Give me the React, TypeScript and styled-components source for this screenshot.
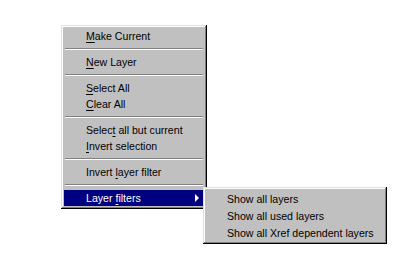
import React from 'react';
import styled, { createGlobalStyle } from 'styled-components';

interface MenuEntry {
  label: string;
  key?: number;
  sep?: boolean;
  active?: boolean;
  sub?: boolean;
}

interface ItemProps {
  readonly $active?: boolean;
}

const GlobalStyle = createGlobalStyle`
  html, body {
    margin: 0;
    padding: 0;
    background: #ffffff;
  }
  body {
    font-family: "Liberation Sans", Arial, sans-serif;
    font-size: 10.6px;
  }
`;

const Page = styled.div`
  width: 409px;
  height: 264px;
  padding: 25px 0 0 61px;
  box-sizing: border-box;
`;

const Menu = styled.div<{ $width: number }>`
  width: ${(p) => p.$width}px;
  box-sizing: border-box;
  padding: 3px;
  background: #c0c0c0;
  box-shadow: inset -1px -1px #000000, inset 1px 1px #dfdfdf,
    inset -2px -2px #808080, inset 2px 2px #ffffff;
  display: flex;
  flex-direction: column;
`;

const Item = styled.div<ItemProps>`
  position: relative;
  height: 16px;
  display: flex;
  align-items: center;
  padding-left: 22px;
  padding-right: 4px;
  color: ${(p) => (p.$active ? '#ffffff' : '#000000')};
  background: ${(p) => (p.$active ? '#000080' : 'transparent')};
  white-space: nowrap;
  cursor: default;
`;

const SubItem = styled(Item)`
  height: 17px;
  padding-left: 21px;
`;

const Key = styled.span`
  text-decoration: underline;
  text-underline-offset: 2px;
`;

const Separator = styled.div`
  height: 10px;
  display: flex;
  flex-direction: column;
  justify-content: center;
  padding: 0 1px;

  &::before {
    content: '';
    display: block;
    height: 1px;
    background: #808080;
  }
  &::after {
    content: '';
    display: block;
    height: 1px;
    background: #ffffff;
  }
`;

const Arrow = styled.span`
  margin-left: auto;
  width: 0;
  height: 0;
  border-top: 4px solid transparent;
  border-bottom: 4px solid transparent;
  border-left: 4px solid currentColor;
  margin-right: 1px;
`;

const Flyout = styled.div`
  position: absolute;
  left: calc(100% - 1px);
  top: -3px;
  z-index: 2;
`;

const MAIN_ITEMS: MenuEntry[] = [
  { label: 'Make Current', key: 0 },
  { label: '', sep: true },
  { label: 'New Layer', key: 0 },
  { label: '', sep: true },
  { label: 'Select All', key: 0 },
  { label: 'Clear All', key: 0 },
  { label: '', sep: true },
  { label: 'Select all but current', key: 5 },
  { label: 'Invert selection', key: 0 },
  { label: '', sep: true },
  { label: 'Invert layer filter', key: 7 },
  { label: '', sep: true },
  { label: 'Layer filters', key: 6, active: true, sub: true },
];

const SUB_ITEMS = ['Show all layers', 'Show all used layers', 'Show all Xref dependent layers'];

const renderLabel = (label: string, key?: number) => {
  if (key === undefined) return label;
  return (
    <span>
      {label.slice(0, key)}
      <Key>{label[key]}</Key>
      {label.slice(key + 1)}
    </span>
  );
};

const App: React.FC = () => {
  const renderItem = (item: MenuEntry, index: number) => {
    if (item.sep) return <Separator key={index} />;
    return (
      <Item key={index} $active={item.active}>
        {renderLabel(item.label, item.key)}
        {item.sub && <Arrow />}
        {item.sub && (
          <Flyout>
            <Menu $width={184}>
              {SUB_ITEMS.map((s) => (
                <SubItem key={s}>{s}</SubItem>
              ))}
            </Menu>
          </Flyout>
        )}
      </Item>
    );
  };

  return (
    <>
      <GlobalStyle />
      <Page>
        <Menu $width={146}>{MAIN_ITEMS.map(renderItem)}</Menu>
      </Page>
    </>
  );
};

export default App;
